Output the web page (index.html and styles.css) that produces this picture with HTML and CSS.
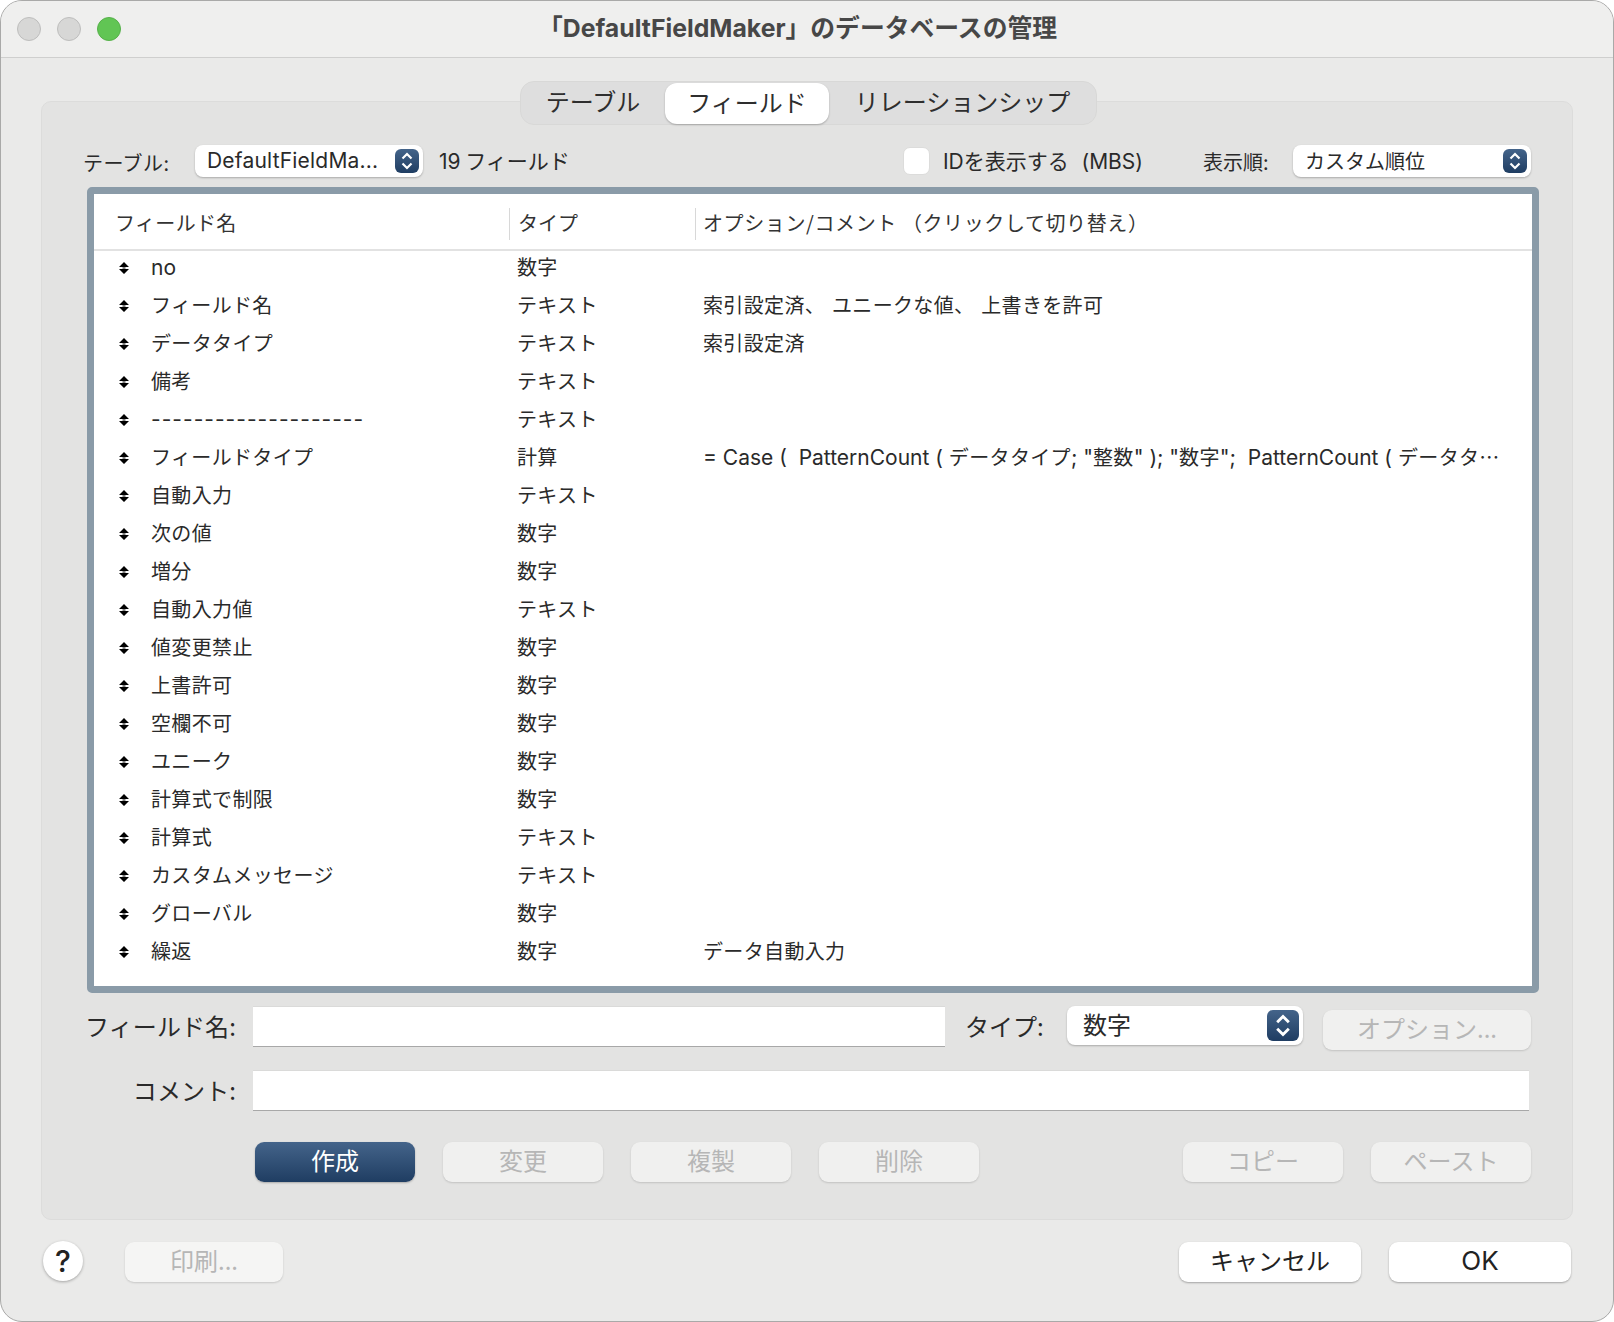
FILE: index.html
```html
<!DOCTYPE html>
<html lang="ja">
<head>
    <meta charset="utf-8">
    <title>データベースの管理</title>
    <link rel="stylesheet" href="styles.css">
</head>
<body>
    <svg class="defs" width="0" height="0">
        <symbol id="move" viewBox="0 0 10 12">
            <path d="M5 0 L10 5 H0 Z M5 12 L10 7 H0 Z" fill="#000"/>
            <rect x="3.5" y="4.5" width="3" height="3" fill="#000"/>
            <rect x="0" y="5.5" width="10" height="1" fill="#fff"/>
        </symbol>
        <symbol id="updown" viewBox="0 0 24 24">
            <path d="M7.5 9.5 L12 5 L16.5 9.5 M7.5 14.5 L12 19 L16.5 14.5" fill="none" stroke="#fff" stroke-width="2.2"/>
        </symbol>
    </svg>

    <div class="window">
        <div class="titlebar">
            <div class="lights">
                <span class="light"></span>
                <span class="light"></span>
                <span class="light green"></span>
            </div>
            <div class="title">「DefaultFieldMaker」のデータベースの管理</div>
        </div>

        <div class="content">
            <div class="panel">
                <div class="tabs">
                    <div class="tab tab-table"><span class="up">テーブル</span></div>
                    <div class="tab tab-field active">フィールド</div>
                    <div class="tab tab-rel"><span class="up">リレーションシップ</span></div>
                </div>

                <div class="toolbar">
                    <span class="label-table">テーブル:</span>
                    <div class="select select-table">
                        <span class="latin">DefaultFieldMa...</span>
                        <svg class="stepper"><use href="#updown"/></svg>
                    </div>
                    <span class="count"><span class="latin">19</span> フィールド</span>
                    <div class="checkbox"></div>
                    <span class="check-label"><span class="latin">ID</span>を表示する <span class="latin">(MBS)</span></span>
                    <span class="label-order">表示順:</span>
                    <div class="select select-order">
                        <span>カスタム順位</span>
                        <svg class="stepper"><use href="#updown"/></svg>
                    </div>
                </div>

                <div class="list">
                    <div class="list-head">
                        <div class="col-name">フィールド名</div>
                        <div class="col-type">タイプ</div>
                        <div class="col-opt">オプション/コメント （クリックして切り替え）</div>
                    </div>
                    <div class="row"><svg class="move"><use href="#move"/></svg><div class="name"><span class="latin">no</span></div><div class="type">数字</div><div class="opt"></div></div>
                    <div class="row"><svg class="move"><use href="#move"/></svg><div class="name">フィールド名</div><div class="type">テキスト</div><div class="opt wide">索引設定済、 ユニークな値、 上書きを許可</div></div>
                    <div class="row"><svg class="move"><use href="#move"/></svg><div class="name">データタイプ</div><div class="type">テキスト</div><div class="opt">索引設定済</div></div>
                    <div class="row"><svg class="move"><use href="#move"/></svg><div class="name">備考</div><div class="type">テキスト</div><div class="opt"></div></div>
                    <div class="row"><svg class="move"><use href="#move"/></svg><div class="name"><span class="latin dashes">--------------------</span></div><div class="type">テキスト</div><div class="opt"></div></div>
                    <div class="row"><svg class="move"><use href="#move"/></svg><div class="name">フィールドタイプ</div><div class="type">計算</div><div class="opt"><span class="latin">= Case (  PatternCount ( </span>データタイプ<span class="latin">; "</span>整数<span class="latin">" ); "</span>数字<span class="latin">";  PatternCount ( </span>データタ…</div></div>
                    <div class="row"><svg class="move"><use href="#move"/></svg><div class="name">自動入力</div><div class="type">テキスト</div><div class="opt"></div></div>
                    <div class="row"><svg class="move"><use href="#move"/></svg><div class="name">次の値</div><div class="type">数字</div><div class="opt"></div></div>
                    <div class="row"><svg class="move"><use href="#move"/></svg><div class="name">増分</div><div class="type">数字</div><div class="opt"></div></div>
                    <div class="row"><svg class="move"><use href="#move"/></svg><div class="name">自動入力値</div><div class="type">テキスト</div><div class="opt"></div></div>
                    <div class="row"><svg class="move"><use href="#move"/></svg><div class="name">値変更禁止</div><div class="type">数字</div><div class="opt"></div></div>
                    <div class="row"><svg class="move"><use href="#move"/></svg><div class="name">上書許可</div><div class="type">数字</div><div class="opt"></div></div>
                    <div class="row"><svg class="move"><use href="#move"/></svg><div class="name">空欄不可</div><div class="type">数字</div><div class="opt"></div></div>
                    <div class="row"><svg class="move"><use href="#move"/></svg><div class="name">ユニーク</div><div class="type">数字</div><div class="opt"></div></div>
                    <div class="row"><svg class="move"><use href="#move"/></svg><div class="name">計算式で制限</div><div class="type">数字</div><div class="opt"></div></div>
                    <div class="row"><svg class="move"><use href="#move"/></svg><div class="name">計算式</div><div class="type">テキスト</div><div class="opt"></div></div>
                    <div class="row"><svg class="move"><use href="#move"/></svg><div class="name">カスタムメッセージ</div><div class="type">テキスト</div><div class="opt"></div></div>
                    <div class="row"><svg class="move"><use href="#move"/></svg><div class="name">グローバル</div><div class="type">数字</div><div class="opt"></div></div>
                    <div class="row"><svg class="move"><use href="#move"/></svg><div class="name">繰返</div><div class="type">数字</div><div class="opt">データ自動入力</div></div>
                </div>

                <div class="form-row form-name">
                    <label class="form-label">フィールド名:</label>
                    <div class="input input-name"></div>
                    <label class="type-label">タイプ:</label>
                    <div class="select select-type">
                        <span>数字</span>
                        <svg class="stepper"><use href="#updown"/></svg>
                    </div>
                    <button class="btn btn-disabled btn-options">オプション...</button>
                </div>
                <div class="form-row form-comment">
                    <label class="form-label">コメント:</label>
                    <div class="input input-comment"></div>
                </div>

                <div class="actions">
                    <button class="btn btn-primary">作成</button>
                    <button class="btn btn-disabled">変更</button>
                    <button class="btn btn-disabled">複製</button>
                    <button class="btn btn-disabled">削除</button>
                    <button class="btn btn-disabled btn-copy">コピー</button>
                    <button class="btn btn-disabled">ペースト</button>
                </div>
            </div>

            <div class="footer">
                <button class="help">?</button>
                <button class="btn btn-faint btn-print">印刷...</button>
                <button class="btn btn-white btn-cancel">キャンセル</button>
                <button class="btn btn-white btn-ok"><span class="latin-ok">OK</span></button>
            </div>
        </div>
    </div>
</body>
</html>
```

FILE: styles.css
```css
* {
    box-sizing: border-box;
}

html, body {
    margin: 0;
    padding: 0;
    background: #fff;
}

body {
    font-family: "Noto Sans CJK JP", sans-serif;
    color: #2a2a2a;
    font-size: 20px;
}

.latin {
    font-family: Inter, sans-serif;
    font-size: 21px;
    letter-spacing: 0;
}

.defs {
    position: absolute;
}

.window {
    width: 1614px;
    height: 1322px;
    background: #eaeae9;
    border: 1px solid #a9a9a8;
    border-radius: 22px;
    overflow: hidden;
}

/* Title bar */
.titlebar {
    height: 57px;
    display: flex;
    align-items: center;
    background: #efefee;
    border-bottom: 1px solid #cfcfce;
}

.lights {
    display: flex;
    gap: 16px;
    padding-left: 16px;
}

.light {
    width: 24px;
    height: 24px;
    border-radius: 50%;
    background: #d7d7d6;
    border: 1px solid #bdbdbc;
}

.light.green {
    background: #61c554;
    border-color: #56b04a;
}

.title {
    margin: -6px 0 0 417px;
    font-family: Inter, "Noto Sans CJK JP", sans-serif;
    font-size: 24.8px;
    font-weight: 700;
    color: #474747;
    white-space: nowrap;
}

.content {
    padding: 43px 40px 0 40px;
}

/* Panel */
.panel {
    height: 1119px;
    background: #e3e3e2;
    border: 1px solid #dcdcdb;
    border-radius: 10px;
    padding: 0 33px 0 45px;
}

.tabs {
    width: 577px;
    height: 44px;
    margin: -21px 0 0 433px;
    display: flex;
    align-items: center;
    background: #dedede;
    border: 1px solid #d8d8d7;
    border-radius: 14px;
    font-size: 24px;
    color: #2e2e2e;
}

.tab {
    text-align: center;
    white-space: nowrap;
}

.up {
    position: relative;
    top: -3px;
}

.tab-table {
    width: 144px;
}

.tab.active {
    width: 164px;
    height: 41px;
    line-height: 38px;
    background: #fff;
    border-radius: 12px;
    box-shadow: 0 1px 2px rgba(0,0,0,0.25);
}

.tab-rel {
    flex: 1;
}

/* Toolbar */
.toolbar {
    display: flex;
    align-items: center;
    height: 32px;
    margin: 20px 8px 0 -3px;
}

.select {
    display: flex;
    align-items: center;
    justify-content: space-between;
    background: #fff;
    border-radius: 8px;
    box-shadow: 0 1px 2px rgba(0,0,0,0.25);
    white-space: nowrap;
}

.select > span {
    margin-bottom: 2px;
}

.stepper {
    width: 24px;
    height: 24px;
    border-radius: 6px;
    background: linear-gradient(#44648a, #1f3d62);
}

.label-table {
    width: 112px;
    margin: 2px 0 0 -1px;
    letter-spacing: 0.4px;
    white-space: nowrap;
}

.select-table {
    width: 228px;
    height: 32px;
    padding: 0 4px 0 12px;
}

.select-table .latin {
    letter-spacing: 0.2px;
}

.count {
    margin: 0 0 2px 16px;
    font-size: 21px;
}

.checkbox {
    width: 27px;
    height: 28px;
    margin-left: auto;
    margin-right: 13px;
    background: #fff;
    border: 1px solid #dcdcdb;
    border-radius: 7px;
}

.check-label {
    margin: 0 60px 2px 0;
    font-size: 21px;
    word-spacing: 8px;
}

.label-order {
    width: 90px;
}

.select-order {
    width: 238px;
    height: 32px;
    padding: 0 4px 0 12px;
}

/* Field list */
.list {
    height: 806px;
    margin-top: 10px;
    background: #fff;
    border: 7px solid #8a9ba8;
    border-radius: 5px;
}

.list-head {
    height: 57px;
    margin-bottom: -2px;
    padding-top: 14px;
    display: grid;
    grid-template-columns: 415px 186px 1fr;
    border-bottom: 2px solid #e2e2e2;
    color: #333;
}

.list-head > div {
    height: 32px;
    line-height: 30px;
    white-space: pre;
}

.col-name {
    padding-left: 21px;
    letter-spacing: 0.35px;
}

.col-type {
    padding-left: 8px;
    border-left: 1px solid #d8d8d8;
}

.col-opt {
    padding-left: 7px;
    border-left: 1px solid #d8d8d8;
    letter-spacing: 0.6px;
}

.row {
    display: grid;
    grid-template-columns: 57px 358px 186px 1fr;
    align-items: center;
    height: 38px;
}

.name, .type, .opt {
    position: relative;
    top: -2px;
    letter-spacing: 0.35px;
}

.move {
    width: 10px;
    height: 12px;
    margin-left: 25px;
}

.type {
    padding-left: 8px;
}

.opt {
    padding-left: 8px;
    white-space: pre;
}

.opt.wide {
    word-spacing: 2px;
}

.dashes {
    letter-spacing: 1px;
}

/* Form */
.form-row {
    display: flex;
    height: 41px;
}

.form-name {
    margin-top: 13px;
}

.form-comment {
    margin-top: 23px;
}

.form-label {
    width: 151px;
    margin: 0 17px 0 -2px;
    text-align: right;
    font-size: 24px;
    line-height: 40px;
    letter-spacing: 0.1px;
    white-space: nowrap;
}

.input {
    height: 41px;
    background: #fff;
    border-top: 1px solid #dadad9;
    border-bottom: 1px solid #a8a8a8;
}

.input-name {
    width: 692px;
}

.input-comment {
    width: 1276px;
}

.type-label {
    margin-left: 20px;
    width: 102px;
    font-size: 24px;
    line-height: 40px;
}

.select-type {
    width: 236px;
    height: 39px;
    padding: 0 4px 0 16px;
    font-size: 24px;
}

.select-type > span {
    margin-bottom: 4px;
}

.select-type .stepper {
    width: 32px;
    height: 31px;
}

.btn {
    height: 40px;
    width: 160px;
    padding: 0 0 6px 0;
    font-family: inherit;
    font-size: 24px;
    border: none;
    border-radius: 9px;
    white-space: nowrap;
}

.btn-disabled {
    background: #f0f0ef;
    color: #b6b6b6;
    box-shadow: 0 1px 2px rgba(0,0,0,0.15);
}

.btn-options {
    width: 208px;
    margin: 4px 0 0 20px;
    padding-bottom: 8px;
}

.actions {
    display: flex;
    gap: 28px;
    margin: 31px 8px 0 168px;
}

.btn-primary {
    background: linear-gradient(#44648a, #1f3d62);
    color: #fff;
    box-shadow: 0 1px 2px rgba(0,0,0,0.25);
}

.btn-copy {
    margin-left: auto;
}

/* Footer */
.footer {
    display: flex;
    align-items: center;
    height: 44px;
    margin-top: 20px;
}

.help {
    width: 40px;
    height: 40px;
    margin: -3px 0 0 2px;
    padding: 0;
    background: #fff;
    border: none;
    border-radius: 50%;
    font-family: Inter, sans-serif;
    font-size: 30px;
    font-weight: 500;
    color: #222;
    box-shadow: 0 1px 3px rgba(0,0,0,0.3);
}

.btn-faint {
    background: #f5f5f4;
    color: #b6b6b6;
    box-shadow: 0 1px 2px rgba(0,0,0,0.15);
    padding-bottom: 7px;
}

.btn-print {
    width: 158px;
    margin-left: 42px;
}

.btn-white {
    width: 182px;
    background: #fff;
    color: #222;
    box-shadow: 0 1px 2px rgba(0,0,0,0.3);
}

.btn-cancel {
    margin-left: auto;
}

.btn-ok {
    margin-left: 28px;
    margin-right: 2px;
}

.latin-ok {
    font-family: Inter, sans-serif;
    font-size: 26px;
}
```
